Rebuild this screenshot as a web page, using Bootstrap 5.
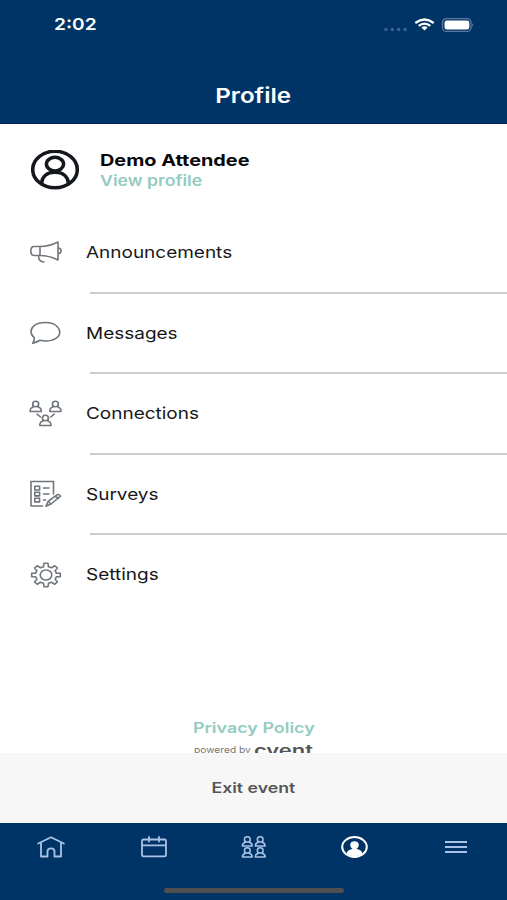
<!DOCTYPE html>
<html lang="en">
<head>
<meta charset="utf-8">
<meta name="viewport" content="width=device-width, initial-scale=1">
<title>Profile</title>
<link href="https://cdn.jsdelivr.net/npm/bootstrap@5.3.0/dist/css/bootstrap.min.css" rel="stylesheet">
<style>
body{font-family:Inter,"Liberation Sans",sans-serif;height:900px;overflow:hidden;color:#171719;background:#fff}
svg{display:block;flex:none;fill:none;stroke-linecap:round;stroke-linejoin:round}
.navy{background:#003366}
.top-bar{height:124px;border-bottom:1px solid #002050}
.status{height:49px;padding:0 33px 0 54px}
.wide{display:inline-block;transform:scaleX(1.22);transform-origin:left center;white-space:nowrap}
.wide-mid{transform-origin:center}
.clock{font-size:16.5px;font-weight:600;transform:scaleX(1.16)}
.title{font-size:20.5px;font-weight:600;line-height:24px;margin-top:35px}
.title .wide{transform:scaleX(1.18)}
.person{height:88px;padding-left:31px}
.person-text{padding:5px 0 0 21px}
.person-name{font-size:16.3px;font-weight:700;line-height:21px;color:#08080a}
.mint{color:#93cbc0}
.person-link{font-size:15px;font-weight:600;line-height:20px;transform:scaleX(1.18)}
.entry{height:80.6px;padding-left:29px;position:relative}
.entry svg{width:33px;height:36px;stroke:#70767c;stroke-width:1.6;margin-right:24px}
.entry .wide{font-size:16.5px;transform:scaleX(1.15)}
.entry:not(:last-child)::after{content:"";position:absolute;left:89.500px;right:0;bottom:-1px;height:2px;background:#cdcdcd}
.legal{height:36px}
.policy{font-size:14.7px;font-weight:600;line-height:23px}
.powered{height:13px;overflow:hidden;padding-left:194px}
.powered-by{font-size:8.5px;line-height:20px;color:#777;width:59.500px}
.powered-by .wide{transform:scaleX(1.2)}
.brand{font-size:16px;font-weight:600;color:#55565a;line-height:20px}
.brand .wide{transform:scaleX(1.37)}
.exit{height:70px;background:#f7f7f8;font-size:14.5px;font-weight:600;color:#555658}
.tabs{height:77px;position:relative}
.tabs a{width:20%;height:48px}
.tabs svg{stroke:#a9c3e6;stroke-width:1.8}
.tabs .seats{stroke-width:1.500}
.home-bar{position:absolute;left:164px;bottom:7px;width:180px;height:5px;border-radius:3px;background:#504e50}
</style>
<script src="https://cdn.jsdelivr.net/npm/bootstrap@5.3.0/dist/js/bootstrap.bundle.min.js"></script>
</head>
<body class="d-flex flex-column">
<header class="navy top-bar text-white flex-shrink-0">
  <div class="status d-flex align-items-center justify-content-between">
    <span class="wide clock">2:02</span>
    <svg width="91" height="16" viewBox="0 0 91 16">
      <g fill="#3b6490"><circle cx="3" cy="12.500" r="1.700"/><circle cx="9.3" cy="12.500" r="1.700"/><circle cx="15.6" cy="12.500" r="1.700"/><circle cx="22" cy="12.500" r="1.700"/></g>
      <g stroke="#fff" stroke-width="2.3" stroke-linecap="butt"><path d="M32.3 6Q41.500-.9 50.700 6"/><path d="M35.700 8.900Q41.500 4.400 47.300 8.900"/></g>
      <path d="M38.400 10.500Q41.500 8.100 44.600 10.500L41.500 13.500Z" fill="#fff"/>
      <rect x="59.500" y="1.600" width="28.500" height="12.800" rx="4" stroke="#5d7b9e" stroke-width="1.300"/>
      <rect x="61.500" y="3.500" width="24.800" height="9" rx="2.300" fill="#fff"/><path d="M89.300 6.300Q91.300 8 89.300 9.700Z" fill="#6e8bad"/>
    </svg>
  </div>
  <div class="title text-center"><span class="wide wide-mid">Profile</span></div>
</header>
<main class="flex-grow-1 d-flex flex-column">
  <section class="person d-flex align-items-center flex-shrink-0 pt-1">
    <svg width="48" height="40" viewBox="0 0 48 40" stroke="#14171c" stroke-width="3.500">
      <ellipse cx="24" cy="19.500" rx="22.300" ry="18.300"/><ellipse cx="24" cy="14.100" rx="8.600" ry="6.800"/><path d="M10.500 33.500C11 26 16.500 22.300 24 22.300S37 26 37.500 33.500"/>
    </svg>
    <div class="person-text pt-0 d-flex flex-column align-items-start">
      <span class="wide person-name">Demo Attendee</span>
      <a class="wide person-link mint text-decoration-none" href="#">View profile</a>
    </div>
  </section>
  <nav class="flex-shrink-0">
    <div class="entry d-flex align-items-center">
      <svg viewBox="0 0 33 36"><path d="M11 12.500H5C.800 12.500.800 21.500 5 21.500H11ZM11 12.500C18 12.500 24 10.500 29 8V26C24 23.500 18 21.500 11 21.500M9.500 21.500C9.500 26 11.500 28 15 28M29.500 14C32.800 14 32.800 19.500 29.500 19.500"/></svg>
      <span class="wide">Announcements</span>
    </div>
    <div class="entry d-flex align-items-center">
      <svg viewBox="0 0 33 36"><path d="M5.200 22.600C.800 19 1 13.500 5.500 10.300C10.500 6.700 22 6.500 27 10.500C32 14.500 32 20 27 23.300C23 26 16 26.500 11 25.300C9 26.500 6.500 27.700 3.700 28.300C5 26.500 5.500 24.500 5.200 22.600Z"/></svg>
      <span class="wide">Messages</span>
    </div>
    <div class="entry d-flex align-items-center">
      <svg viewBox="0 0 33 36">
        <defs><g id="member"><ellipse cx="0" cy="-3" rx="3" ry="2.800"/><path d="M-2.600-1.500V.200C-4.500.500-5.600 1.800-5.600 4.500H5.600C5.600 1.800 4.500.500 2.600.200V-1.500"/></g></defs>
        <use href="#member" x="6.700" y="12"/><use href="#member" x="26.400" y="12"/><use href="#member" x="16.400" y="26"/>
        <path d="M8 19.200L11.500 22M25.200 19.200L21.700 22"/>
      </svg>
      <span class="wide">Connections</span>
    </div>
    <div class="entry d-flex align-items-center">
      <svg viewBox="0 0 33 36"><path d="M13.500 30H2V5.500H24.500V18M5.800 10.300H10.600V14H5.800ZM5.800 16.200H10.600V19.900H5.800ZM5.800 22.200H10.600V25.900H5.800ZM14.500 12H20M14.500 18H20M14.500 24H16.500M17 30.200L19 25.500L28.200 18.700Q30 17.800 31.500 20.200L22 28ZM26.300 20.200L29.300 22.500M19 25.500L22 28"/></svg>
      <span class="wide">Surveys</span>
    </div>
    <div class="entry d-flex align-items-center">
      <svg viewBox="0 0 33 36"><ellipse cx="17" cy="18" rx="5.800" ry="5"/><path d="M15 6.300H19L19.500 9.800L22.500 10.800L25.800 8.800L28.500 11L26.100 13.700L27.300 16.200H31.300V19.800H27.300L26.100 22.300L28.500 25L25.800 27.200L22.500 25.200L19.500 26.200L19 29.700H15L14.500 26.200L11.500 25.200L8.200 27.200L5.500 25L7.900 22.300L6.700 19.800H2.700V16.200H6.700L7.900 13.700L5.500 11L8.200 8.800L11.500 10.800L14.500 9.800Z"/></svg>
      <span class="wide">Settings</span>
    </div>
  </nav>
  <div class="legal mt-auto">
    <div class="policy text-center"><a class="wide wide-mid mint text-decoration-none" href="#">Privacy Policy</a></div>
    <div class="powered d-flex"><span class="powered-by"><span class="wide">powered by</span></span><span class="brand"><span class="wide">cvent</span></span></div>
  </div>
</main>
<div class="exit d-flex align-items-center justify-content-center flex-shrink-0"><span class="wide wide-mid">Exit event</span></div>
<footer class="tabs navy d-flex flex-shrink-0">
  <a class="d-flex align-items-center justify-content-center" href="#" aria-label="Home"><svg width="28" height="22" viewBox="0 0 28 22"><path d="M1.200 7.500L14 1.200L26.800 7.500M4 6.500V20.500H10.500V15.500C10.500 11.300 17.500 11.300 17.500 15.500V20.500H24V6.500"/></svg></a>
  <a class="d-flex align-items-center justify-content-center" href="#" aria-label="Schedule"><svg class="ms-1" width="26" height="22" viewBox="0 0 26 22"><path d="M2.500 3.500H23.500Q25 3.500 25 5V18.500Q25 20.300 23.500 20.300H2.500Q1 20.300 1 18.500V5Q1 3.500 2.500 3.500ZM1 9.300H25M8 1V5.500M18 1V5.500"/></svg></a>
  <a class="d-flex align-items-center justify-content-center" href="#" aria-label="Attendees"><svg class="seats" width="26" height="22" viewBox="0 0 26 22"><defs><g id="seat"><ellipse cx="0" cy="-2.600" rx="2.900" ry="2.600"/><path d="M-2.300-.800V.600C-4 1-4.900 2-4.900 4H4.900C4.900 2 4 1 2.300.600V-.800"/></g></defs><use href="#seat" x="7.300" y="6"/><use href="#seat" x="20.200" y="6"/><use href="#seat" x="7.300" y="17"/><use href="#seat" x="20.200" y="17"/></svg></a>
  <a class="d-flex align-items-center justify-content-center" href="#" aria-label="Profile"><svg width="27" height="22" viewBox="0 0 27 22"><ellipse cx="13.500" cy="11" rx="12.300" ry="9.900" stroke="#fff" stroke-width="2"/><path d="M5.500 17.500C6 14.700 8.500 13.700 11.500 13C9.500 11.500 9.200 9.800 9.200 8.500C9.200 4 17.800 4 17.800 8.500C17.800 9.800 17.500 11.500 15.500 13C18.500 13.700 21 14.700 21.500 17.500C17.500 21 9.500 21 5.500 17.500Z" fill="#fff" stroke="none"/></svg></a>
  <a class="d-flex align-items-center justify-content-center" href="#" aria-label="Menu"><svg width="22" height="14" viewBox="0 0 22 14" stroke-linecap="butt"><path d="M0 2H22M0 7H22M0 12H22"/></svg></a>
  <div class="home-bar"></div>
</footer>
</body>
</html>
